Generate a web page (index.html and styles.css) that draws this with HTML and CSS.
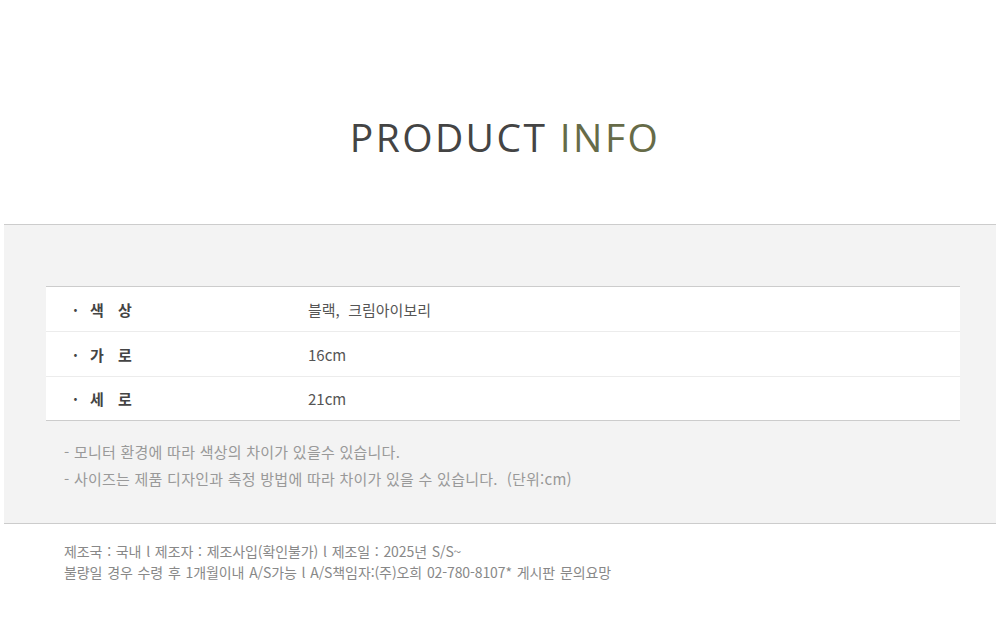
FILE: index.html
```html
<!DOCTYPE html>
<html lang="ko">
<head>
<meta charset="utf-8">
<link rel="stylesheet" href="styles.css">
</head>
<body>
<div class="page">
  <header class="head">
    <h1 class="title">PRODUCT <span class="accent">INFO</span></h1>
  </header>
  <section class="panel">
    <div class="table">
      <div class="row">
        <div class="label"><span class="dot">·</span><span class="ch">색</span><span class="ch">상</span></div>
        <div class="value">블랙,&nbsp; 크림아이보리</div>
      </div>
      <div class="row">
        <div class="label"><span class="dot">·</span><span class="ch">가</span><span class="ch">로</span></div>
        <div class="value">16cm</div>
      </div>
      <div class="row">
        <div class="label"><span class="dot">·</span><span class="ch">세</span><span class="ch">로</span></div>
        <div class="value">21cm</div>
      </div>
    </div>
    <div class="notes">
      <p>- 모니터 환경에 따라 색상의 차이가 있을수 있습니다.</p>
      <p>- 사이즈는 제품 디자인과 측정 방법에 따라 차이가 있을 수 있습니다.&nbsp; (단위:cm)</p>
    </div>
  </section>
  <footer class="foot">
    <p>제조국 : 국내 l 제조자 : 제조사입(확인불가) l 제조일 : 2025년 S/S~</p>
    <p>불량일 경우 수령 후 1개월이내 A/S가능 l A/S책임자:(주)오희 02-780-8107* 게시판 문의요망</p>
  </footer>
</div>
</body>
</html>
```

FILE: styles.css
```css
html, body {
  margin: 0;
  padding: 0;
  background: #fff;
}
.page {
  width: 1000px;
  font-family: "Noto Sans CJK KR", "Noto Sans", sans-serif;
}
.head {
  height: 224px;
  display: flex;
  align-items: flex-start;
  justify-content: center;
}
.title {
  margin: 113px 0 0 10px;
  font-family: "Open Sans", "Noto Sans", sans-serif;
  font-weight: 500;
  font-size: 39px;
  line-height: 48px;
  letter-spacing: 2.4px;
  color: #444444;
}
.accent {
  color: #666b48;
}
.panel {
  margin: 0 4px;
  background: #f3f3f3;
  border-top: 1px solid #cccccc;
  border-bottom: 1px solid #cccccc;
  padding: 61px 36px 0 42px;
  height: 237px;
}
.table {
  background: #fff;
  border-top: 1px solid #cccccc;
  border-bottom: 1px solid #cccccc;
}
.row {
  display: flex;
  align-items: center;
  height: 44px;
  border-bottom: 1px solid #ececec;
  font-size: 15px;
  color: #555;
}
.row:last-child {
  border-bottom: none;
  height: 43px;
}
.label {
  width: 235px;
  padding-left: 27px;
  font-weight: 700;
  font-size: 15px;
  color: #444;
  display: flex;
  align-items: center;
}
.dot {
  width: 17px;
}
.ch {
  width: 28px;
}
.value {
  color: #555;
}
.notes {
  padding: 17px 0 0 18px;
  font-size: 15px;
  color: #999;
  letter-spacing: 0.25px;
}
.notes p {
  margin: 0;
  line-height: 27px;
}
.foot {
  padding: 17px 0 0 64px;
  font-size: 14px;
  color: #888;
  letter-spacing: -0.1px;
  word-spacing: 1px;
}
.foot p {
  margin: 0;
  line-height: 21px;
}
```
